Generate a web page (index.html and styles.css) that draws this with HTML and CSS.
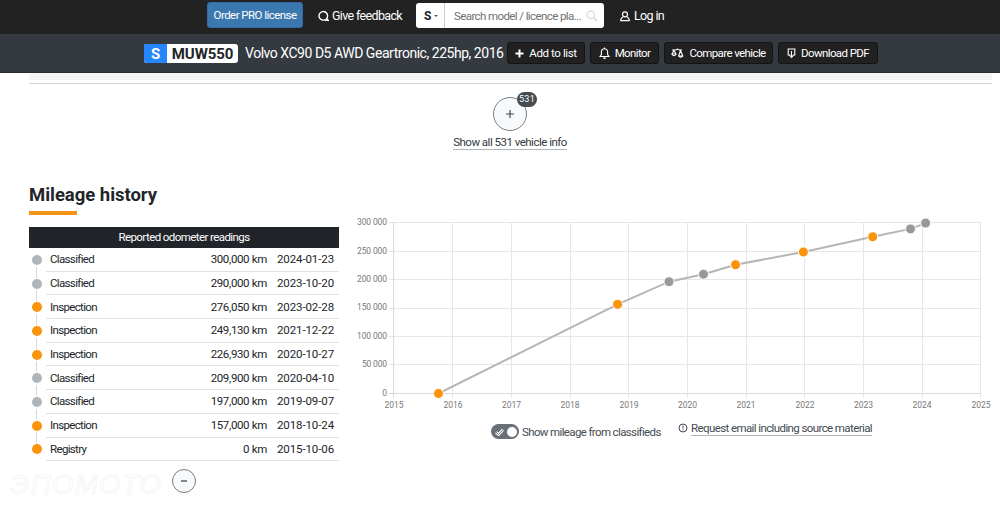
FILE: index.html
```html
<!DOCTYPE html>
<html lang="en">
<head>
<meta charset="utf-8">
<title>Mileage history</title>
<link rel="stylesheet" href="styles.css">
</head>
<body>
<header class="topbar">
  <a class="pro">Order PRO license</a>
  <a class="feedback"><svg width="11" height="12" viewBox="0 0 11 12"><path d="M7.6 9.4A4.3 4.3 0 1 1 9.6 5.6Q9.600 7.800 8.600 8.800L10.200 10.200H7" fill="none" stroke="#fff" stroke-width="1.4"/></svg><span>Give feedback</span></a>
  <div class="search">
    <span class="country">S<i class="caret"></i></span>
    <span class="query">Search model / licence pla...</span>
    <svg width="12" height="12" viewBox="0 0 12 12"><circle cx="4.8" cy="4.8" r="3.8" fill="none" stroke="#ddd" stroke-width="1.3"/><path d="M7.6 7.6L11.2 11.2" stroke="#ddd" stroke-width="1.8"/></svg>
  </div>
  <a class="login"><svg width="10" height="11" viewBox="0 0 10 11"><circle cx="5" cy="3.3" r="2.5" fill="none" stroke="#fff" stroke-width="1.2"/><path d="M3.1 5.6L.8 8.2V9.6H9.2V8.2L6.9 5.6" fill="none" stroke="#fff" stroke-width="1.2"/></svg><span>Log in</span></a>
</header>
<div class="carbar">
  <span class="plate"><b class="nation">S</b><b class="number">MUW550</b></span>
  <h1 class="car">Volvo XC90 D5 AWD Geartronic, 225hp, 2016</h1>
  <a class="action add"><svg width="9" height="9" viewBox="0 0 9 9"><path d="M4.5 .5V8.500M.5 4.500H8.500" stroke="#fff" stroke-width="2"/></svg><span>Add to list</span></a>
  <a class="action monitor"><svg width="11" height="13" viewBox="0 0 11 13"><path d="M1 9.500H10L8.600 7.500V5A3.100 3.200 0 0 0 2.400 5V7.500ZM5.500 1.800V.5" fill="none" stroke="#fff" stroke-width="1.100"/><path d="M4 10.500A1.500 1.500 0 0 0 7 10.500Z" fill="#fff"/></svg><span>Monitor</span></a>
  <a class="action compare"><svg width="13" height="11" viewBox="0 0 13 11"><path d="M1 2H4.500L6.500 1L8.500 2H11M3 2.500L1 6H5ZM9.500 2.500L7.600 8H11.800ZM1 6.500Q3 9 5 6.500M7.600 8Q9.700 10.500 11.800 8" fill="none" stroke="#fff" stroke-width="1.100"/></svg><span>Compare vehicle</span></a>
  <a class="action download"><svg width="9" height="11" viewBox="0 0 9 11"><path d="M3 7H1.200V1H7.800V7H6M4.500 3V9M2.500 7.200L4.500 9.400L6.500 7.200" fill="none" stroke="#fff" stroke-width="1.100"/></svg><span>Download PDF</span></a>
</div>
<main>
  <div class="strip"></div>
  <div class="more">
    <span class="circle"><svg width="10" height="10" viewBox="0 0 10 10"><path d="M5 1V9M1 5H9" stroke="#444b52" stroke-width="1.200"/></svg><em class="badge">531</em></span>
    <a class="show-all">Show all 531 vehicle info</a>
  </div>
  <div class="content">
    <section class="history">
      <h2>Mileage history</h2>
      <div class="accent"></div>
      <div class="caption"><span>Reported odometer readings</span></div>
      <ul class="readings">
        <li><i class="dot"></i><div class="row"><span class="kind">Classified</span><span class="km">300,000 km</span><span class="date">2024-01-23</span></div></li>
        <li><i class="dot"></i><div class="row"><span class="kind">Classified</span><span class="km">290,000 km</span><span class="date">2023-10-20</span></div></li>
        <li><i class="dot orange"></i><div class="row"><span class="kind">Inspection</span><span class="km">276,050 km</span><span class="date">2023-02-28</span></div></li>
        <li><i class="dot orange"></i><div class="row"><span class="kind">Inspection</span><span class="km">249,130 km</span><span class="date">2021-12-22</span></div></li>
        <li><i class="dot orange"></i><div class="row"><span class="kind">Inspection</span><span class="km">226,930 km</span><span class="date">2020-10-27</span></div></li>
        <li><i class="dot"></i><div class="row"><span class="kind">Classified</span><span class="km">209,900 km</span><span class="date">2020-04-10</span></div></li>
        <li><i class="dot"></i><div class="row"><span class="kind">Classified</span><span class="km">197,000 km</span><span class="date">2019-09-07</span></div></li>
        <li><i class="dot orange"></i><div class="row"><span class="kind">Inspection</span><span class="km">157,000 km</span><span class="date">2018-10-24</span></div></li>
        <li><i class="dot orange"></i><div class="row"><span class="kind">Registry</span><span class="km">0 km</span><span class="date">2015-10-06</span></div></li>
      </ul>
      <span class="collapse"><svg width="6" height="2" viewBox="0 0 6 2"><path d="M0 1H6" stroke="#444b52" stroke-width="1.300"/></svg></span>
    </section>
    <section class="graph">
      <svg class="chart" width="660" height="210" viewBox="340 205 660 210">
        <g class="grid">
          <path d="M389 222.500H981M389 251.500H981M389 279.500H981M389 308.500H981M389 336.500H981M389 364.500H981"/>
          <path d="M452.500 222V398M511.500 222V398M570.500 222V398M628.500 222V398M687.500 222V398M746.500 222V398M804.500 222V398M863.500 222V398M922.500 222V398M980.500 222V398"/>
          <path class="axis" d="M389 393.500H981M393.500 222V398"/>
        </g>
        <g class="ylabels">
          <text x="387" y="225" textLength="30">300 000</text><text x="387" y="254" textLength="30">250 000</text><text x="387" y="282" textLength="30">200 000</text><text x="387" y="310" textLength="30">150 000</text><text x="387" y="339" textLength="30">100 000</text><text x="387" y="367" textLength="25">50 000</text><text x="387" y="396">0</text>
        </g>
        <g class="xlabels">
          <text x="394" y="408">2015</text><text x="453" y="408">2016</text><text x="511.500" y="408">2017</text><text x="570" y="408">2018</text><text x="629" y="408">2019</text><text x="687.500" y="408">2020</text><text x="746" y="408">2021</text><text x="805" y="408">2022</text><text x="863.500" y="408">2023</text><text x="922" y="408">2024</text><text x="981" y="408">2025</text>
        </g>
        <path class="line" d="M438.500 393.500L617.600 304.300L669 281.700L703.500 274.200L735.600 264.700L803.400 252L872.700 236.800L910.500 228.900L925.600 223.100"/>
        <g class="orange-points"><circle cx="438.500" cy="393.500" r="5"/><circle cx="617.600" cy="304.300" r="5"/><circle cx="735.600" cy="264.700" r="5"/><circle cx="803.400" cy="252" r="5"/><circle cx="872.700" cy="236.800" r="5"/></g>
        <g class="grey-points"><circle cx="669" cy="281.700" r="5"/><circle cx="703.500" cy="274.200" r="5"/><circle cx="910.500" cy="228.900" r="5"/><circle cx="925.600" cy="223.100" r="5"/></g>
      </svg>
      <div class="controls">
        <span class="toggle"><svg width="9" height="8" viewBox="0 0 9 8"><path d="M1 4.200L3.500 6.500L8 1.800" fill="none" stroke="#fff" stroke-width="2.800"/><path d="M1 4.200L3.500 6.500L8 1.800" fill="none" stroke="#697078" stroke-width="1"/></svg><i class="knob"></i></span>
        <span class="toggle-label">Show mileage from classifieds</span>
        <svg class="info" width="10" height="10" viewBox="0 0 10 10"><circle cx="5" cy="5" r="4" fill="none" stroke="#444b52"/><path d="M5 2.500V5.600M5 6.500V7.500" stroke="#444b52"/></svg>
        <a class="request">Request email including source material</a>
      </div>
    </section>
  </div>
</main>
<div class="watermark">ЭПОМОТО</div>
</body>
</html>
```
FILE: styles.css
```css
* { box-sizing: border-box; }
body { margin: 0; width: 1000px; height: 506px; overflow: hidden; background: #fff; color: #212529; font: 12px/16px Roboto, "Liberation Sans", sans-serif; }
svg { display: block; flex: none; }
h1, h2, ul { margin: 0; padding: 0; }
a, span, h1, h2 { white-space: nowrap; }
.topbar { height: 34px; background: #222; color: #fff; display: flex; align-items: flex-start; padding-left: 207px; }
.pro { width: 96px; height: 26px; margin-top: 2px; background: #3c78b0; border: 1px solid #346a9f; border-radius: 3px; line-height: 25px; text-align: center; font-size: 11.5px; letter-spacing: -.55px; }
.feedback { display: flex; align-items: center; gap: 3px; height: 32px; margin-left: 15px; width: 98px; font-size: 12.5px; letter-spacing: -.65px; }
.search { display: flex; align-items: center; width: 188px; height: 25px; margin-top: 3px; background: #fff; border-radius: 3px; color: #6f6f6f; }
.country { display: flex; align-items: center; width: 29px; height: 25px; padding-left: 8px; gap: 3px; color: #222; font-weight: 700; border-right: 1px solid #ccc; }
.caret { border: 2.5px solid transparent; border-top-color: #555; border-bottom: 0; }
.query { width: 141px; padding-left: 9px; font-size: 11.5px; letter-spacing: -.6px; }
.login { display: flex; align-items: center; gap: 4px; height: 32px; margin-left: 16px; font-size: 12.5px; letter-spacing: -.65px; }
.carbar { height: 39px; background: #343a40; border-bottom: 1px solid #292d31; color: #fff; display: flex; align-items: center; padding-left: 144px; }
.plate { display: flex; width: 94px; height: 19px; border-radius: 3px; overflow: hidden; line-height: 20px; font-size: 15px; background: #fff; color: #212529; text-align: center; }
.nation { width: 23px; background: #2684ff; color: #fff; }
.number { width: 71px; letter-spacing: -.1px; }
.car { width: 263px; padding-left: 7px; font-size: 14px; line-height: 20px; font-weight: 400; letter-spacing: -.47px; }
.action { height: 22px; background: #212121; border: 1px solid #121416; border-radius: 3px; display: flex; align-items: center; gap: 5px; justify-content: center; margin-right: 5px; font-size: 11.5px; letter-spacing: -.6px; }
.add { margin-left: 6px; width: 78px; letter-spacing: -.4px; }
.monitor { width: 69px; }
.compare { width: 109px; }
.download { width: 100px; }
.strip { height: 11px; width: 963px; margin-left: 29px; background: linear-gradient(#f4f4f4 0 7px, #fff 7px); border-bottom: 1px solid #d5d5d5; }
.more { height: 93px; display: flex; flex-direction: column; align-items: center; padding: 13px 0 0 20px; }
.circle { position: relative; display: flex; align-items: center; justify-content: center; width: 34px; height: 34px; border: 1px solid #777e85; border-radius: 50%; background: #f8f9fa; }
.badge { position: absolute; left: 23px; top: -6px; width: 20px; height: 15px; border-radius: 8px; background: #444b52; color: #fff; font: 9px/15px Roboto, sans-serif; text-align: center; letter-spacing: .2px; }
.show-all { height: 18px; margin-top: 1px; line-height: 20px; border-bottom: 1px solid #adb5bd; letter-spacing: -.51px; color: #343a40; font-size: 11.5px; }
.content { display: flex; padding-left: 29px; }
.history { width: 311px; }
h2 { padding-top: 7px; font-size: 18.5px; line-height: 22px; letter-spacing: -.03px; }
.accent { width: 48px; height: 4px; margin-top: 5px; background: #f59515; }
.caption { width: 310px; height: 21px; margin-top: 12px; background: #212529; color: #fff; text-align: center; line-height: 21px; font-size: 11.5px; letter-spacing: -.58px; }
.readings { list-style: none; width: 310px; font-size: 11.5px; }
.readings li { display: flex; align-items: center; height: 23.7px; gap: 4px; padding-left: 3px; }
.dot { position: relative; width: 10px; height: 10px; border-radius: 50%; background: #adb5bd; flex: none; }
.dot.orange { background: #fb930b; }
.readings li + li .dot::before { content: ""; position: absolute; left: 4px; top: -12px; width: 1px; height: 11px; background: #d5d8db; }
.row { display: flex; align-items: center; height: 100%; flex: 1; border-bottom: 1px solid #dee2e6; padding-left: 4px; }
.kind { flex: 1; letter-spacing: -.65px; }
.km { letter-spacing: -.35px; }
.date { margin-left: 10px; margin-right: 5px; letter-spacing: -.1px; }
.collapse { display: flex; align-items: center; justify-content: center; width: 24px; height: 24px; margin: 8px 0 0 143px; border: 1px solid #777e85; border-radius: 50%; background: #f8f9fa; }
.graph { width: 660px; padding-top: 28px; }
.grid path { fill: none; stroke: #e6e6e6; }
.grid .axis { stroke: #dadada; }
.ylabels, .xlabels { font-family: Roboto, sans-serif; font-size: 8.5px; fill: #777; }
.ylabels { text-anchor: end; }
.xlabels { text-anchor: middle; }
.line { fill: none; stroke: #b6b6b6; stroke-width: 2; }
.orange-points, .grey-points { stroke: #fff; stroke-width: 1; fill: #fb930b; }
.grey-points { fill: #999; }
.controls { display: flex; align-items: flex-start; padding: 9px 0 0 151px; color: #444b52; }
.toggle { display: flex; align-items: center; justify-content: space-between; width: 28px; height: 15px; padding: 0 2px 0 4px; border-radius: 8px; background: #697078; }
.knob { width: 10px; height: 10px; border-radius: 50%; background: #fff; }
.toggle-label { width: 156px; padding-left: 3px; letter-spacing: -.63px; font-size: 11.5px; }
.info { margin: -1px 4px 0 3px; }
.request { margin: -4px 0 0 -1px; height: 16px; line-height: 16px; border-bottom: 1px solid #adb5bd; font-size: 11.5px; letter-spacing: -.6px; }
.watermark { position: absolute; left: 10px; top: 470px; width: 162px; overflow: hidden; font: italic 28px/30px "Liberation Sans", sans-serif; letter-spacing: 1px; color: transparent; -webkit-text-stroke: .5px #ededed; }
```
